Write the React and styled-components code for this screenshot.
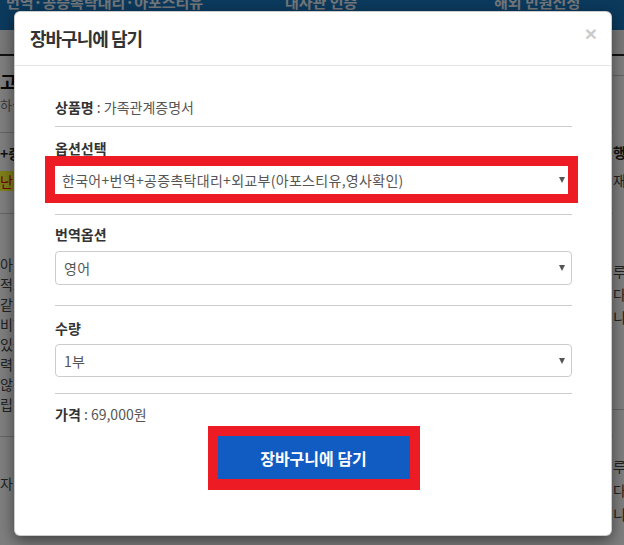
import React from 'react';
import styled, {createGlobalStyle} from "styled-components";

const leftLines = ['아닌 경우', '적으로', '같이 진행', '비하여', ' 있습니다', '력 공증', ' 않는', '립니다'];
const rightLines = ['루이', '다.', '니다'];

const App = () => {
    return (
        <Page>
            <GlobalStyle/>
            <Nav>
                <NavItem $w={279}>번역·공증촉탁대리·아포스티유</NavItem>
                <NavItem $w={209}>대사관 인증</NavItem>
                <NavItem>해외 민원신청</NavItem>
            </Nav>
            <SubBar/>
            <Columns>
                <LeftCol>
                    <PageTitle>고객 안내</PageTitle>
                    <PageSub>하실 때 참고하세요</PageSub>
                    <Rule $top={18}/>
                    <StrongLine $top={10}>+중계</StrongLine>
                    <Marked>난계</Marked>
                    <Rule $top={22}/>
                    <Para>
                        {leftLines.map((line) => <div key={line}>{line}</div>)}
                    </Para>
                    <Rule $top={22}/>
                    <Para $top={36}>자, 안내</Para>
                </LeftCol>
                <RightCol>
                    <Rule $top={19}/>
                    <StrongLine $top={66}>행정</StrongLine>
                    <PlainLine>재발급</PlainLine>
                    <Para $top={70} $lh={23}>
                        {rightLines.map((line) => <div key={line}>{line}</div>)}
                    </Para>
                    <Rule $top={80}/>
                    <Para $top={44} $lh={24}>
                        {rightLines.map((line) => <div key={line}>{line}</div>)}
                    </Para>
                </RightCol>
            </Columns>

            <Backdrop/>

            <Modal>
                <Header>
                    <Title>장바구니에 담기</Title>
                    <Close>×</Close>
                </Header>
                <Body>
                    <InfoLine><b>상품명</b> : 가족관계증명서</InfoLine>
                    <Divider $top={9}/>

                    <Label $top={13}>옵션선택</Label>
                    <Highlight>
                        <Select $bare>
                            <span>한국어+번역+공증촉탁대리+외교부(아포스티유,영사확인)</span>
                            <Arrow/>
                        </Select>
                    </Highlight>
                    <Divider $top={11}/>

                    <Label $top={11}>번역옵션</Label>
                    <Select $top={9}>
                        <span>영어</span>
                        <Arrow/>
                    </Select>
                    <Divider $top={20}/>

                    <Label $top={14}>수량</Label>
                    <Select $top={8} $h={33}>
                        <span>1부</span>
                        <Arrow/>
                    </Select>
                    <Divider $top={16}/>

                    <InfoLine $top={10}><b>가격</b> : 69,000원</InfoLine>
                    <ButtonFrame>
                        <CartButton>장바구니에 담기</CartButton>
                    </ButtonFrame>
                </Body>
            </Modal>
        </Page>
    );
};

const GlobalStyle = createGlobalStyle`
  html, body {
    margin: 0;
    padding: 0;
    background: #fff;
  }

  body {
    font-family: "Noto Sans CJK KR", "Noto Sans", sans-serif;
  }
`

const Page = styled.div`
  position: relative;
  width: 624px;
  height: 545px;
  overflow: hidden;
  background: #fff;
`

const Nav = styled.div`
  display: flex;
  height: 30px;
  padding-left: 6px;
  background: #1774ba;
  overflow: hidden;
`

const NavItem = styled.div`
  flex: 0 0 ${({$w}) => $w ? `${$w}px` : 'auto'};
  margin-top: -8px;
  font-size: 15px;
  font-weight: 700;
  line-height: 20px;
  color: #e8eef5;
  white-space: nowrap;
`

const SubBar = styled.div`
  height: 24px;
  background: #f3f3f3;
  border-bottom: 2px solid #222;
`

const Columns = styled.div`
  display: grid;
  grid-template-columns: 613px 1fr;
  white-space: nowrap;
  color: #333;
`

const LeftCol = styled.div`
  display: flex;
  flex-direction: column;
`

const RightCol = styled.div`
  display: flex;
  flex-direction: column;
`

const PageTitle = styled.div`
  margin-top: 14px;
  font-size: 18px;
  font-weight: 700;
  line-height: 22px;
  color: #111;
`

const PageSub = styled.div`
  margin-top: 4px;
  font-size: 13px;
  line-height: 18px;
  color: #777;
`

const Rule = styled.div`
  margin-top: ${({$top}) => $top}px;
  border-top: 1px solid #ccc;
`

const StrongLine = styled.div`
  margin-top: ${({$top}) => $top || 12}px;
  font-size: 14px;
  font-weight: 700;
  line-height: 20px;
  color: #222;
`

const PlainLine = styled.div`
  margin-top: 8px;
  font-size: 14px;
  line-height: 20px;
  color: #444;
`

const Marked = styled.div`
  margin-top: 8px;
  font-size: 14px;
  line-height: 20px;
  color: #d00;
  background: #ffff33;
  width: max-content;
`

const Para = styled.div`
  margin-top: ${({$top}) => $top || 40}px;
  font-size: 14px;
  line-height: ${({$lh}) => $lh || 20}px;
  color: #444;
`

const Backdrop = styled.div`
  position: absolute;
  inset: 0;
  background: rgba(0, 0, 0, 0.5);
`

const Modal = styled.div`
  position: absolute;
  left: 14px;
  top: 11px;
  width: 598px;
  height: 525px;
  box-sizing: border-box;
  display: flex;
  flex-direction: column;
  background: #fff;
  border: 1px solid rgba(0, 0, 0, 0.2);
  border-radius: 6px;
  box-shadow: 0 5px 15px rgba(0, 0, 0, 0.5);
`

const Header = styled.div`
  display: flex;
  justify-content: space-between;
  padding: 14px 14px 14px 15px;
  border-bottom: 1px solid #e5e5e5;
`

const Title = styled.div`
  font-size: 18px;
  font-weight: 700;
  line-height: 25px;
  letter-spacing: -1px;
  color: #333;
`

const Close = styled.div`
  margin-top: -3px;
  font-family: "Liberation Sans", sans-serif;
  font-size: 21px;
  font-weight: 700;
  line-height: 21px;
  color: #000;
  opacity: 0.2;
`

const Body = styled.div`
  display: flex;
  flex-direction: column;
  padding: 31px 39px 0 40px;
`

const InfoLine = styled.div`
  margin-top: ${({$top}) => $top || 0}px;
  font-size: 14px;
  line-height: 20px;
  color: #555;

  b {
    color: #333;
  }
`

const Divider = styled.div`
  margin-top: ${({$top}) => $top}px;
  border-top: 1px solid #ccc;
`

const Label = styled.div`
  margin-top: ${({$top}) => $top}px;
  font-size: 14px;
  font-weight: 700;
  line-height: 16px;
  color: #333;
`

const Highlight = styled.div`
  margin: 0 -6px 0 -10px;
  border-style: solid;
  border-color: #ed1c24;
  border-width: 10px 10px 9px 10px;
`

const Select = styled.div`
  display: flex;
  align-items: center;
  justify-content: space-between;
  box-sizing: border-box;
  height: ${({$bare, $h}) => $bare ? 28 : ($h || 34)}px;
  margin-top: ${({$top}) => $top || 0}px;
  padding: ${({$bare}) => $bare ? '0 3px 0 7px' : '0 6px 0 8px'};
  border: ${({$bare}) => $bare ? 'none' : '1px solid #ccc'};
  border-radius: ${({$bare}) => $bare ? 0 : 4}px;
  background: #fff;
  font-size: 14px;
  letter-spacing: 0.3px;
  color: #555;
  white-space: nowrap;
`

const Arrow = styled.span`
  width: 0;
  height: 0;
  border-left: 3px solid transparent;
  border-right: 3px solid transparent;
  border-top: 6px solid #555;
`

const ButtonFrame = styled.div`
  align-self: center;
  margin-top: 2px;
  border-style: solid;
  border-color: #ed1c24;
  border-width: 10px 10px 11px 10px;
`

const CartButton = styled.button`
  display: block;
  width: 192px;
  height: 43px;
  border: none;
  background: #115cc3;
  color: #fff;
  font-family: "Noto Sans CJK KR", sans-serif;
  font-size: 16px;
  font-weight: 700;
`

export default App;
